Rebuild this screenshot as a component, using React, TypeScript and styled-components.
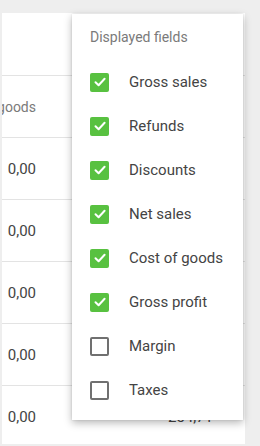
import React from "react";
import styled, { createGlobalStyle } from "styled-components";

const Global = createGlobalStyle`
  html, body { margin: 0; padding: 0; }
  body {
    background: #eeeeee;
    font-family: Roboto, "Noto Sans", Arial, sans-serif;
    width: 260px;
    height: 446px;
    overflow: hidden;
  }
`;

const Page = styled.div`
  position: relative;
  width: 260px;
  height: 446px;
  padding: 13px 15px 0 2px;
  box-sizing: border-box;
`;

const Card = styled.div`
  background: #ffffff;
  height: 431px;
  overflow: hidden;
  display: flex;
  flex-direction: column;
`;

const Toolbar = styled.div`
  height: 63px;
  flex-shrink: 0;
  border-bottom: 1px solid #e3e3e3;
  box-sizing: border-box;
`;

const Row = styled.div<{ $head?: boolean }>`
  height: 62px;
  flex-shrink: 0;
  display: grid;
  grid-template-columns: 34px 177px;
  align-items: center;
  border-bottom: 1px solid #e3e3e3;
  box-sizing: border-box;
  font-size: ${(p) => (p.$head ? "14px" : "15px")};
  color: ${(p) => (p.$head ? "#7a7a7a" : "#444444")};
`;

const Cell = styled.div`
  display: flex;
  justify-content: flex-end;
  white-space: nowrap;
`;

const Menu = styled.div`
  position: absolute;
  left: 72px;
  top: 14px;
  width: 171px;
  height: 406px;
  background: #ffffff;
  box-shadow: 0 3px 8px rgba(0, 0, 0, 0.28), 0 0 2px rgba(0, 0, 0, 0.12);
  padding: 13px 0 0 18px;
  box-sizing: border-box;
`;

const Title = styled.div`
  font-size: 14px;
  line-height: 20px;
  color: #7a7a7a;
  margin-bottom: 13px;
`;

const Item = styled.label`
  display: flex;
  align-items: center;
  height: 44px;
  gap: 20px;
  font-size: 15px;
  color: #444444;
`;

const Box = styled.span<{ $on: boolean }>`
  width: 19px;
  height: 19px;
  box-sizing: border-box;
  border-radius: 2px;
  flex-shrink: 0;
  display: flex;
  align-items: center;
  justify-content: center;
  background: ${(p) => (p.$on ? "#58c140" : "#ffffff")};
  border: ${(p) => (p.$on ? "none" : "2px solid #707070")};
`;

const fields: [string, boolean][] = [
  ["Gross sales", true],
  ["Refunds", true],
  ["Discounts", true],
  ["Net sales", true],
  ["Cost of goods", true],
  ["Gross profit", true],
  ["Margin", false],
  ["Taxes", false],
];

export default function App() {
  return (
    <>
      <Global />
      <Page>
        <Card>
          <Toolbar />
          <Row $head>
            <Cell>Cost of goods</Cell>
            <Cell />
          </Row>
          {[0, 1, 2, 3, 4].map((i) => (
            <Row key={i}>
              <Cell>0,00</Cell>
              <Cell>{i === 4 ? "254,71" : ""}</Cell>
            </Row>
          ))}
        </Card>
        <Menu>
          <Title>Displayed fields</Title>
          {fields.map(([name, on]) => (
            <Item key={name}>
              <Box $on={on}>
                {on && (
                  <svg width="14" height="14" viewBox="0 0 14 14">
                    <path d="M2.5 7.2 L5.6 10.2 L11.6 3.8" fill="none" stroke="#ffffff" strokeWidth="2" strokeLinecap="round" strokeLinejoin="round" />
                  </svg>
                )}
              </Box>
              {name}
            </Item>
          ))}
        </Menu>
      </Page>
    </>
  );
}
